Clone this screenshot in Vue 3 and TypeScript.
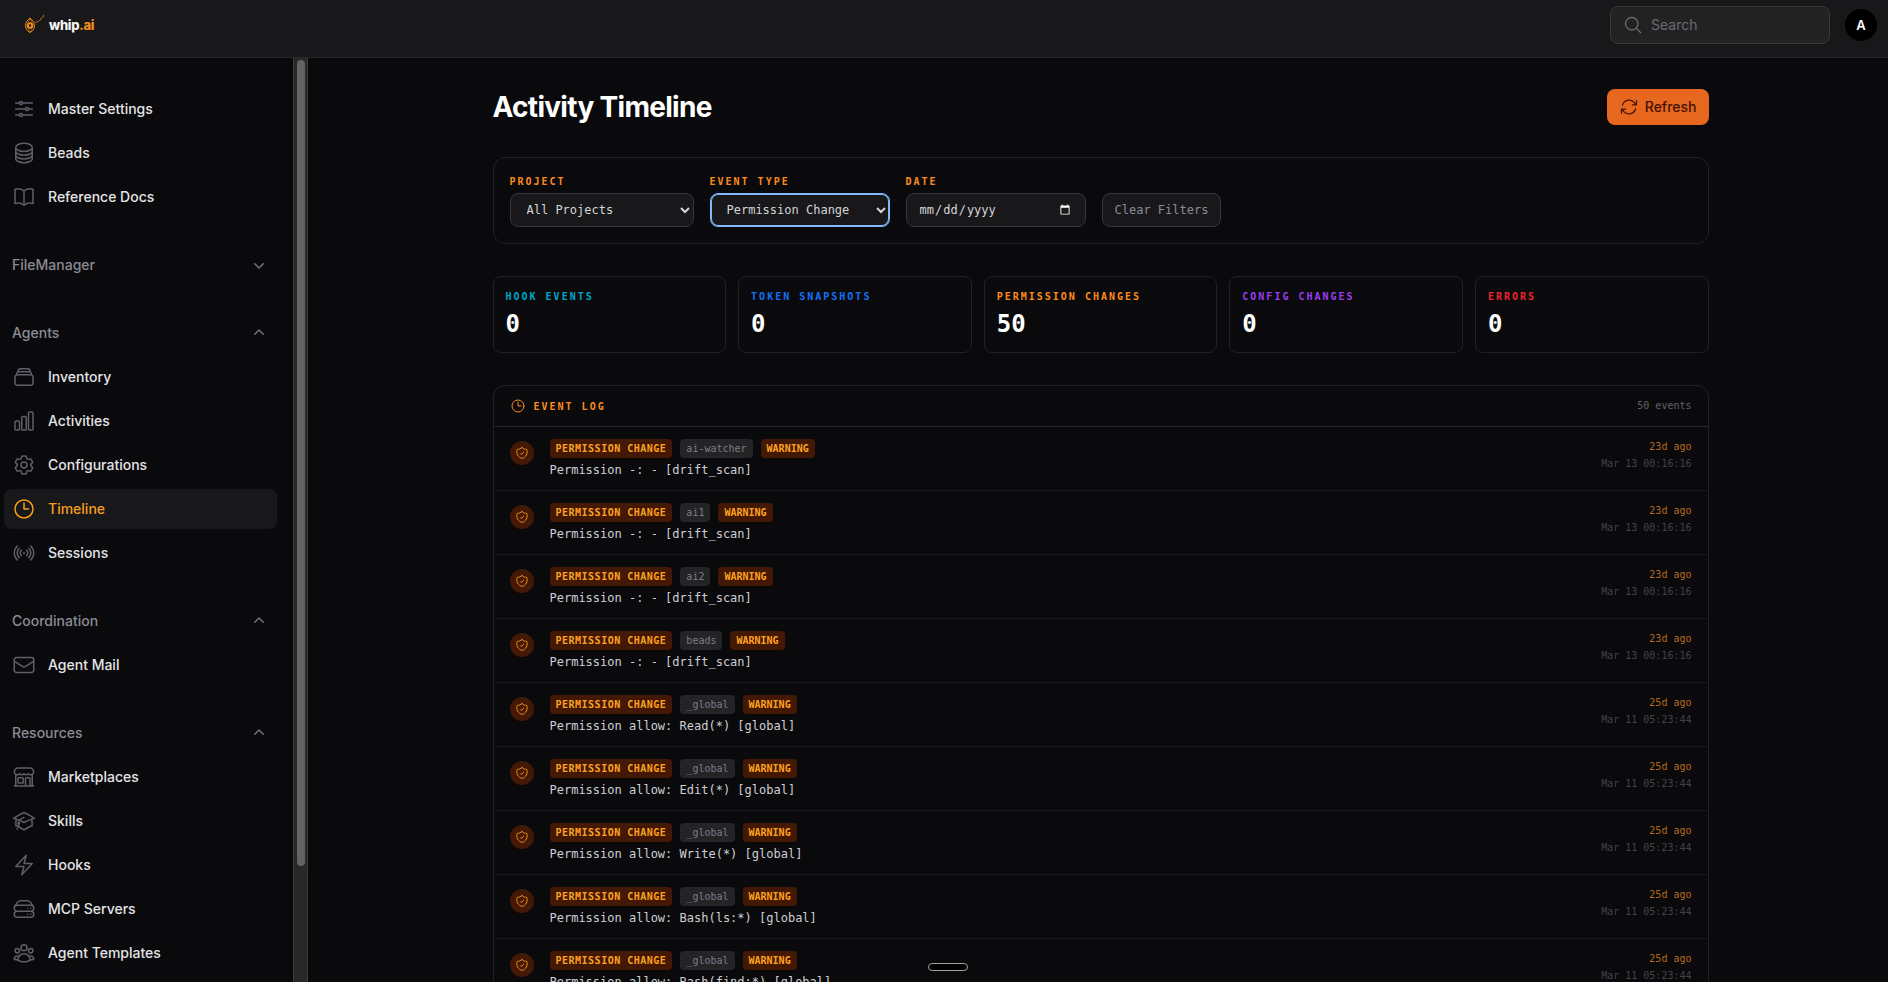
<script setup lang="ts">
import { ref } from 'vue'

interface NavItem {
  label: string
  icon: string
  active?: boolean
}

interface NavGroup {
  label?: string
  open: boolean
  items: NavItem[]
}

interface LogEvent {
  project: string
  text: string
  ago: string
  at: string
}

const icons: Record<string, string> = {
  sliders:
    'M10.5 6h9.75M10.5 6a1.5 1.5 0 1 1-3 0m3 0a1.5 1.5 0 1 0-3 0M3.75 6H7.5m3 12h9.75m-9.75 0a1.5 1.5 0 0 1-3 0m3 0a1.5 1.5 0 0 0-3 0m-3.75 0H7.5m9-6h3.75m-3.75 0a1.5 1.5 0 0 1-3 0m3 0a1.5 1.5 0 0 0-3 0m-9.75 0h9.75',
  database:
    'M20.25 6.375c0 2.278-3.694 4.125-8.25 4.125S3.75 8.653 3.75 6.375m16.5 0c0-2.278-3.694-4.125-8.25-4.125S3.75 4.097 3.75 6.375m16.5 0v11.25c0 2.278-3.694 4.125-8.25 4.125s-8.25-1.847-8.25-4.125V6.375m16.5 0v3.75m-16.5-3.75v3.75m16.5 0v3.75C20.25 16.153 16.556 18 12 18s-8.25-1.847-8.25-4.125v-3.75m16.5 0c0 2.278-3.694 4.125-8.25 4.125s-8.25-1.847-8.25-4.125',
  book: 'M12 6.042A8.967 8.967 0 0 0 6 3.75c-1.052 0-2.062.18-3 .512v14.25A8.987 8.987 0 0 1 6 18c2.305 0 4.408.867 6 2.292m0-14.25a8.966 8.966 0 0 1 6-2.292c1.052 0 2.062.18 3 .512v14.25A8.987 8.987 0 0 0 18 18a8.967 8.967 0 0 0-6 2.292m0-14.25v14.25',
  stack:
    'M6 6.878V6a2.25 2.25 0 0 1 2.25-2.25h7.5A2.25 2.25 0 0 1 18 6v.878m-12 0c.235-.083.487-.128.75-.128h10.5c.263 0 .515.045.75.128m-12 0A2.25 2.25 0 0 0 4.5 9v.878m13.5-3A2.25 2.25 0 0 1 19.5 9v.878m0 0a2.246 2.246 0 0 0-.75-.128H5.25c-.263 0-.515.045-.75.128m15 0A2.25 2.25 0 0 1 21 12v6a2.25 2.25 0 0 1-2.25 2.25H5.25A2.25 2.25 0 0 1 3 18v-6c0-.98.626-1.813 1.5-2.122',
  chart:
    'M3 13.125C3 12.504 3.504 12 4.125 12h2.25c.621 0 1.125.504 1.125 1.125v6.75C7.5 20.496 6.996 21 6.375 21h-2.25A1.125 1.125 0 0 1 3 19.875v-6.75ZM9.75 8.625c0-.621.504-1.125 1.125-1.125h2.25c.621 0 1.125.504 1.125 1.125v11.25c0 .621-.504 1.125-1.125 1.125h-2.25a1.125 1.125 0 0 1-1.125-1.125V8.625ZM16.5 4.125c0-.621.504-1.125 1.125-1.125h2.25C20.496 3 21 3.504 21 4.125v15.75c0 .621-.504 1.125-1.125 1.125h-2.25a1.125 1.125 0 0 1-1.125-1.125V4.125Z',
  cog: 'M9.594 3.94c.09-.542.56-.94 1.11-.94h2.593c.55 0 1.02.398 1.11.94l.213 1.281c.063.374.313.686.645.87.074.04.147.083.22.127.325.196.72.257 1.075.124l1.217-.456a1.125 1.125 0 0 1 1.37.49l1.296 2.247a1.125 1.125 0 0 1-.26 1.431l-1.003.827c-.293.241-.438.613-.43.992a7.723 7.723 0 0 1 0 .255c-.008.378.137.75.43.991l1.004.827c.424.35.534.955.26 1.43l-1.298 2.247a1.125 1.125 0 0 1-1.369.491l-1.217-.456c-.355-.133-.75-.072-1.076.124a6.47 6.47 0 0 1-.22.128c-.331.183-.581.495-.644.869l-.213 1.281c-.09.543-.56.94-1.11.94h-2.594c-.55 0-1.019-.398-1.11-.94l-.213-1.281c-.062-.374-.312-.686-.644-.87a6.52 6.52 0 0 1-.22-.127c-.325-.196-.72-.257-1.076-.124l-1.217.456a1.125 1.125 0 0 1-1.369-.49l-1.297-2.247a1.125 1.125 0 0 1 .26-1.431l1.004-.827c.292-.24.437-.613.43-.991a6.932 6.932 0 0 1 0-.255c.007-.38-.138-.751-.43-.992l-1.004-.827a1.125 1.125 0 0 1-.26-1.43l1.297-2.247a1.125 1.125 0 0 1 1.37-.491l1.216.456c.356.133.751.072 1.076-.124.072-.044.146-.086.22-.128.332-.183.582-.495.644-.869l.214-1.28ZM15 12a3 3 0 1 1-6 0 3 3 0 0 1 6 0Z',
  clock: 'M12 6v6h4.5m4.5 0a9 9 0 1 1-18 0 9 9 0 0 1 18 0Z',
  signal:
    'M9.348 14.652a3.75 3.75 0 0 1 0-5.304m5.304 0a3.75 3.75 0 0 1 0 5.304m-7.425 2.121a6.75 6.75 0 0 1 0-9.546m9.546 0a6.75 6.75 0 0 1 0 9.546M5.106 18.894c-3.808-3.807-3.808-9.98 0-13.788m13.788 0c3.808 3.807 3.808 9.98 0 13.788M12 12h.008v.008H12V12Zm.375 0a.375.375 0 1 1-.75 0 .375.375 0 0 1 .75 0Z',
  mail: 'M21.75 6.75v10.5a2.25 2.25 0 0 1-2.25 2.25h-15a2.25 2.25 0 0 1-2.25-2.25V6.75m19.5 0A2.25 2.25 0 0 0 19.5 4.5h-15a2.25 2.25 0 0 0-2.25 2.25m19.5 0v.243a2.25 2.25 0 0 1-1.07 1.916l-7.5 4.615a2.25 2.25 0 0 1-2.36 0L3.32 8.91a2.25 2.25 0 0 1-1.07-1.916V6.75',
  store:
    'M13.5 21v-7.5a.75.75 0 0 1 .75-.75h3a.75.75 0 0 1 .75.75V21m-4.5 0H2.36m11.14 0H18m0 0h3.64m-1.39 0V9.349M3.75 21V9.349m0 0a3.001 3.001 0 0 0 3.75-.615A2.993 2.993 0 0 0 9.75 9.75c.896 0 1.7-.393 2.25-1.016a2.993 2.993 0 0 0 2.25 1.016c.896 0 1.7-.393 2.25-1.015a3.001 3.001 0 0 0 3.75.614m-16.5 0a3.004 3.004 0 0 1-.621-4.72l1.189-1.19A1.5 1.5 0 0 1 5.378 3h13.243a1.5 1.5 0 0 1 1.06.44l1.19 1.189a3 3 0 0 1-.621 4.72M6.75 18h3.75a.75.75 0 0 0 .75-.75V13.5a.75.75 0 0 0-.75-.75H6.75a.75.75 0 0 0-.75.75v3.75c0 .414.336.75.75.75Z',
  cap: 'M4.26 10.147a60.438 60.438 0 0 0-.491 6.347A48.62 48.62 0 0 1 12 20.904a48.62 48.62 0 0 1 8.232-4.41 60.46 60.46 0 0 0-.491-6.347m-15.482 0a50.636 50.636 0 0 0-2.658-.813A59.906 59.906 0 0 1 12 3.493a59.903 59.903 0 0 1 10.399 5.84c-.896.248-1.783.52-2.658.814m-15.482 0A50.717 50.717 0 0 1 12 13.489a50.702 50.702 0 0 1 7.74-3.342M6.75 15a.75.75 0 1 0 0-1.5.75.75 0 0 0 0 1.5Zm0 0v-3.675A55.378 55.378 0 0 1 12 8.443m-7.007 11.55A5.981 5.981 0 0 0 6.75 15.75v-1.5',
  bolt: 'm3.75 13.5 10.5-11.25L12 10.5h8.25L9.75 21.75 12 13.5H3.75Z',
  server:
    'M5.25 14.25h13.5m-13.5 0a3 3 0 0 1-3-3m3 3a3 3 0 1 0 0 6h13.5a3 3 0 1 0 0-6m-16.5-3a3 3 0 0 1 3-3h13.5a3 3 0 0 1 3 3m-19.5 0a4.5 4.5 0 0 1 .9-2.7L5.737 5.1a3.375 3.375 0 0 1 2.7-1.35h7.126c1.062 0 2.062.5 2.7 1.35l2.587 3.45a4.5 4.5 0 0 1 .9 2.7m0 0a3 3 0 0 1-3 3m0 3h.008v.008h-.008v-.008Zm0-6h.008v.008h-.008v-.008Zm-3 6h.008v.008h-.008v-.008Zm0-6h.008v.008h-.008v-.008Z',
  users:
    'M18 18.72a9.094 9.094 0 0 0 3.741-.479 3 3 0 0 0-4.682-2.72m.94 3.198.001.031c0 .225-.012.447-.037.666A11.944 11.944 0 0 1 12 21c-2.17 0-4.207-.576-5.963-1.584A6.062 6.062 0 0 1 6 18.719m12 0a5.971 5.971 0 0 0-.941-3.197m0 0A5.995 5.995 0 0 0 12 12.75a5.995 5.995 0 0 0-5.058 2.772m0 0a3 3 0 0 0-4.681 2.72 8.986 8.986 0 0 0 3.74.477m.94-3.197a5.971 5.971 0 0 0-.94 3.197M15 6.75a3 3 0 1 1-6 0 3 3 0 0 1 6 0Zm6 3a2.25 2.25 0 1 1-4.5 0 2.25 2.25 0 0 1 4.5 0Zm-13.5 0a2.25 2.25 0 1 1-4.5 0 2.25 2.25 0 0 1 4.5 0Z',
  refresh:
    'M16.023 9.348h4.992v-.001M2.985 19.644v-4.992m0 0h4.992m-4.993 0 3.181 3.183a8.25 8.25 0 0 0 13.803-3.7M4.031 9.865a8.25 8.25 0 0 1 13.803-3.7l3.181 3.182m0-4.991v4.99',
  shield:
    'M9 12.75 11.25 15 15 9.75m-3-7.036A11.959 11.959 0 0 1 3.598 6 11.99 11.99 0 0 0 3 9.749c0 5.592 3.824 10.29 9 11.623 5.176-1.332 9-6.03 9-11.622 0-1.31-.21-2.571-.598-3.751h-.152c-3.196 0-6.1-1.248-8.25-3.285Z',
  search: 'm21 21-5.197-5.197m0 0A7.5 7.5 0 1 0 5.196 5.196a7.5 7.5 0 0 0 10.607 10.607Z',
}

const groups = ref<NavGroup[]>([
  {
    open: true,
    items: [
      { label: 'Master Settings', icon: 'sliders' },
      { label: 'Beads', icon: 'database' },
      { label: 'Reference Docs', icon: 'book' },
    ],
  },
  { label: 'FileManager', open: false, items: [] },
  {
    label: 'Agents',
    open: true,
    items: [
      { label: 'Inventory', icon: 'stack' },
      { label: 'Activities', icon: 'chart' },
      { label: 'Configurations', icon: 'cog' },
      { label: 'Timeline', icon: 'clock', active: true },
      { label: 'Sessions', icon: 'signal' },
    ],
  },
  { label: 'Coordination', open: true, items: [{ label: 'Agent Mail', icon: 'mail' }] },
  {
    label: 'Resources',
    open: true,
    items: [
      { label: 'Marketplaces', icon: 'store' },
      { label: 'Skills', icon: 'cap' },
      { label: 'Hooks', icon: 'bolt' },
      { label: 'MCP Servers', icon: 'server' },
      { label: 'Agent Templates', icon: 'users' },
    ],
  },
])

const stats = [
  { label: 'Hook Events', value: 0, tone: 'cyan' },
  { label: 'Token Snapshots', value: 0, tone: 'blue' },
  { label: 'Permission Changes', value: 50, tone: 'orange' },
  { label: 'Config Changes', value: 0, tone: 'purple' },
  { label: 'Errors', value: 0, tone: 'red' },
]

const drift = (project: string): LogEvent => ({
  project,
  text: 'Permission -: - [drift_scan]',
  ago: '23d ago',
  at: 'Mar 13 00:16:16',
})

const allow = (rule: string): LogEvent => ({
  project: '_global',
  text: `Permission allow: ${rule} [global]`,
  ago: '25d ago',
  at: 'Mar 11 05:23:44',
})

const events: LogEvent[] = [
  ...['ai-watcher', 'ai1', 'ai2', 'beads'].map(drift),
  ...['Read(*)', 'Edit(*)', 'Write(*)', 'Bash(ls:*)', 'Bash(find:*)'].map(allow),
]

const query = ref('')
const project = ref('all')
const eventType = ref('permission')
const date = ref('')

function clearFilters() {
  project.value = 'all'
  eventType.value = 'all'
  date.value = ''
}
</script>

<template>
  <div class="app">
    <header class="topbar">
      <a class="brand" href="#">
        <svg class="brand-mark" viewBox="0 0 20 20" aria-hidden="true">
          <path d="M5 4.500C8 6.200 9.500 8.500 9.500 11.500S8 17 5 18.500C2 17 .5 14.500 .5 11.500S2 6.200 5 4.500Z" />
          <path class="thin" d="M5 4.500 1.800 11.500 5 18.500 8.200 11.500Z" />
          <circle cx="5" cy="11.500" r="2.200" />
          <path class="lash" d="M10.500 8.500 13 7.500M14 6.800 15.500 6 16 4.500M17 3.500 18.500 2.800V1.200" />
        </svg>
        <span class="brand-name">whip<span class="brand-dot">.ai</span></span>
      </a>
      <div class="topbar-end">
        <label class="search">
          <svg class="icon20" viewBox="0 0 24 24" aria-hidden="true"><path :d="icons.search" /></svg>
          <input v-model="query" type="search" placeholder="Search" aria-label="Search" />
        </label>
        <button class="avatar" type="button" aria-label="User menu">A</button>
      </div>
    </header>

    <div class="body">
      <aside class="sidebar">
        <nav class="nav">
          <section v-for="(group, i) in groups" :key="i" class="group">
            <button v-if="group.label" class="group-head" type="button" :aria-expanded="group.open" @click="group.open = !group.open">
              <span>{{ group.label }}</span>
              <svg class="chevron" :class="{ up: group.open }" viewBox="0 0 20 20" aria-hidden="true">
                <path d="M5.220 8.220a.75.75 0 0 1 1.060 0L10 11.940l3.720-3.720a.75.75 0 1 1 1.060 1.060l-4.250 4.250a.75.75 0 0 1-1.060 0L5.220 9.280a.75.75 0 0 1 0-1.060Z" />
              </svg>
            </button>
            <template v-if="group.open">
              <a v-for="item in group.items" :key="item.label" class="nav-item" :class="{ active: item.active }" href="#">
                <svg class="icon24" viewBox="0 0 24 24" aria-hidden="true"><path :d="icons[item.icon]" /></svg>
                <span>{{ item.label }}</span>
              </a>
            </template>
          </section>
        </nav>
        <div class="track" aria-hidden="true"><div class="thumb"></div></div>
      </aside>

      <main class="main">
        <div class="content">
          <div class="page-head">
            <h1>Activity Timeline</h1>
            <button class="refresh" type="button">
              <svg class="icon20" viewBox="0 0 24 24" aria-hidden="true"><path :d="icons.refresh" /></svg>
              <span>Refresh</span>
            </button>
          </div>

          <form class="filters" @submit.prevent>
            <div class="field">
              <label class="caption" for="project">Project</label>
              <select id="project" v-model="project" class="control wide">
                <option value="all">All Projects</option>
              </select>
            </div>
            <div class="field">
              <label class="caption" for="type">Event Type</label>
              <select id="type" v-model="eventType" class="control focused">
                <option value="all">All Events</option>
                <option value="permission">Permission Change</option>
              </select>
            </div>
            <div class="field">
              <label class="caption" for="date">Date</label>
              <input id="date" v-model="date" class="control" type="date" />
            </div>
            <button class="control clear" type="button" @click="clearFilters">Clear Filters</button>
          </form>

          <div class="stats">
            <div v-for="s in stats" :key="s.label" class="stat">
              <div class="caption" :class="s.tone">{{ s.label }}</div>
              <div class="stat-value">{{ s.value }}</div>
            </div>
          </div>

          <section class="log">
            <div class="log-head">
              <svg class="icon16" viewBox="0 0 24 24" aria-hidden="true"><path :d="icons.clock" /></svg>
              <h2 class="caption">Event Log</h2>
              <span class="count">50 events</span>
            </div>
            <ul class="rows">
              <li v-for="(e, i) in events" :key="i" class="row">
                <span class="row-icon">
                  <svg class="icon14" viewBox="0 0 24 24" aria-hidden="true"><path :d="icons.shield" /></svg>
                </span>
                <div class="row-main">
                  <div class="badges">
                    <span class="badge kind">PERMISSION CHANGE</span>
                    <span class="badge project">{{ e.project }}</span>
                    <span class="badge level">WARNING</span>
                  </div>
                  <p class="row-text">{{ e.text }}</p>
                </div>
                <div class="row-time">
                  <span class="ago">{{ e.ago }}</span>
                  <time class="at">{{ e.at }}</time>
                </div>
              </li>
            </ul>
          </section>
        </div>
      </main>
    </div>

    <div class="handle" aria-hidden="true"></div>
  </div>
</template>

<style>
body {
  margin: 0;
  background: #0a0a0c;
}
</style>

<style scoped>
.app {
  --mono: Menlo, 'DejaVu Sans Mono', monospace;
  --line: #212124;
  position: relative;
  display: flex;
  flex-direction: column;
  height: 100vh;
  overflow: hidden;
  background: #0a0a0c;
  color: #e4e4e7;
  color-scheme: dark;
  font-family: Inter, sans-serif;
  font-size: 14px;
  line-height: 20px;
}
*,
*::before,
*::after {
  box-sizing: border-box;
}
button,
input,
select {
  font: inherit;
  margin: 0;
}
button {
  cursor: pointer;
}
a {
  color: inherit;
  text-decoration: none;
}
h1,
h2,
p,
ul {
  margin: 0;
  padding: 0;
}
svg {
  flex: none;
  fill: none;
  stroke: currentColor;
  stroke-width: 1.5;
  stroke-linecap: round;
  stroke-linejoin: round;
}
.icon24 {
  width: 24px;
  height: 24px;
}
.icon20 {
  width: 20px;
  height: 20px;
}
.icon16 {
  width: 16px;
  height: 16px;
}
.icon14 {
  width: 14px;
  height: 14px;
}

/* Top bar */
.topbar {
  display: flex;
  flex: none;
  align-items: flex-start;
  justify-content: space-between;
  height: 58px;
  padding: 6px 11px 0 25px;
  border-bottom: 1px solid #27272a;
  background: #18181b;
}
.brand {
  display: flex;
  align-items: center;
  gap: 4px;
  height: 38px;
}
.brand-mark {
  width: 20px;
  height: 20px;
  margin-bottom: 2px;
  color: #f28c1c;
  stroke-width: 1;
}
.brand-mark circle {
  stroke-width: 2;
}
.brand-mark .thin {
  stroke-width: 0.5;
}
.brand-mark .lash {
  opacity: 0.7;
}
.brand-name {
  color: #f4f4f5;
  font-size: 13px;
  font-weight: 800;
  letter-spacing: -0.025em;
}
.brand-dot {
  color: #f28c1c;
}
.topbar-end {
  display: flex;
  align-items: center;
  gap: 15px;
}
.search {
  display: flex;
  align-items: center;
  gap: 8px;
  width: 220px;
  height: 38px;
  padding: 0 12px;
  border: 1px solid #3a3a3d;
  border-radius: 8px;
  background: #222223;
  color: #71717a;
}
.search input {
  flex: 1;
  min-width: 0;
  padding: 0;
  border: 0;
  outline: 0;
  background: transparent;
  color: #e4e4e7;
}
.search input::placeholder {
  color: #6b6b74;
}
.avatar {
  width: 32px;
  height: 32px;
  padding: 0;
  border: 0;
  border-radius: 50%;
  background: #000;
  color: #fff;
  font-size: 13px;
  font-weight: 600;
}

/* Sidebar */
.body {
  display: flex;
  flex: 1;
  min-height: 0;
}
.sidebar {
  display: flex;
  flex: none;
  width: 308px;
  overflow: hidden;
}
.nav {
  display: flex;
  flex: 1;
  flex-direction: column;
  gap: 28px;
  padding: 31px 16px 0 4px;
}
.group {
  display: flex;
  flex-direction: column;
  gap: 4px;
}
.group-head,
.nav-item {
  display: flex;
  align-items: center;
  width: 100%;
  height: 40px;
  padding: 0 8px;
  border: 0;
  border-radius: 8px;
  background: transparent;
  font-weight: 500;
}
.group-head {
  justify-content: space-between;
  color: #8b8b95;
}
.chevron {
  width: 20px;
  height: 20px;
  fill: #71717a;
  stroke: none;
}
.chevron.up {
  transform: rotate(180deg);
}
.nav-item {
  gap: 12px;
  color: #e4e4e7;
}
.nav-item .icon24 {
  color: #5f5f69;
}
.nav-item.active {
  background: #18181b;
  color: #f59e1b;
}
.nav-item.active .icon24 {
  color: #f59e1b;
}
.track {
  width: 15px;
  padding: 2px 2px 0 3px;
  border: solid #3b3b3b;
  border-width: 0 1px;
  background: #282828;
}
.thumb {
  width: 8px;
  height: 87.4%;
  border-radius: 4px;
  background: #636363;
}

/* Page */
.main {
  flex: 1;
  min-width: 0;
  padding: 31px 32px 0 37px;
  overflow: hidden;
}
.content {
  display: flex;
  flex-direction: column;
  gap: 32px;
  max-width: 1216px;
  margin: 0 auto;
}
.page-head {
  display: flex;
  align-items: center;
  justify-content: space-between;
}
h1 {
  color: #fff;
  font-size: 28px;
  font-weight: 700;
  letter-spacing: -0.025em;
  line-height: 36px;
}
.refresh {
  display: flex;
  align-items: center;
  gap: 6px;
  height: 36px;
  padding: 0 12px;
  border: 0;
  border-radius: 8px;
  background: #e8671e;
  color: #441306;
  font-weight: 500;
}
.caption {
  color: #fb8a1e;
  font-family: var(--mono);
  font-size: 10px;
  font-weight: 700;
  letter-spacing: 0.2em;
  line-height: 15px;
  text-transform: uppercase;
}
.cyan {
  color: #00a6c8;
}
.blue {
  color: #1570f5;
}
.purple {
  color: #9a3cf0;
}
.red {
  color: #f0242f;
}
.filters {
  display: flex;
  flex-wrap: wrap;
  align-items: flex-end;
  gap: 16px;
  padding: 16px;
  border: 1px solid var(--line);
  border-radius: 12px;
}
.field {
  display: flex;
  flex-direction: column;
  gap: 4px;
}
.control {
  width: 180px;
  height: 34px;
  padding: 0 12px;
  border: 1px solid #37373b;
  border-radius: 8px;
  outline: 0;
  background-color: #18181b;
  color: #d4d4d8;
  font-family: var(--mono);
  font-size: 12px;
}
select.control {
  padding-right: 0;
}
.control.wide {
  width: 184px;
}
.control.focused {
  border-color: #83b9fa;
  box-shadow: inset 0 0 0 1px #83b9fa;
}
.control.clear {
  width: auto;
  color: #8b8b95;
}
.stats {
  display: grid;
  grid-template-columns: repeat(5, 1fr);
  gap: 12px;
}
.stat {
  display: flex;
  flex-direction: column;
  gap: 4px;
  padding: 12px;
  border: 1px solid var(--line);
  border-radius: 8px;
}
.stat-value {
  color: #fff;
  font-family: var(--mono);
  font-size: 24px;
  font-weight: 700;
  line-height: 32px;
}

/* Event log */
.log {
  border: 1px solid var(--line);
  border-radius: 12px;
}
.log-head {
  display: flex;
  align-items: center;
  gap: 8px;
  height: 41px;
  padding: 0 16px;
  border-bottom: 1px solid #27272a;
  color: #fb8a1e;
}
.count {
  margin-left: auto;
  color: #62626c;
  font-family: var(--mono);
  font-size: 10px;
}
.rows {
  list-style: none;
}
.row {
  display: flex;
  align-items: flex-start;
  gap: 16px;
  padding: 12px 16px;
  border-bottom: 1px solid #19191c;
  font-family: var(--mono);
}
.row-icon {
  display: flex;
  flex: none;
  align-items: center;
  justify-content: center;
  width: 24px;
  height: 24px;
  margin-top: 2px;
  border-radius: 50%;
  background: #431805;
  color: #f9981c;
}
.row-main {
  display: flex;
  flex: 1;
  flex-direction: column;
  gap: 4px;
  min-width: 0;
}
.badges {
  display: flex;
  gap: 8px;
}
.badge {
  padding: 2px 6px;
  border-radius: 4px;
  background: #431805;
  color: #fda21f;
  font-size: 10px;
  font-weight: 700;
  line-height: 15px;
}
.badge.kind {
  letter-spacing: 0.05em;
}
.badge.project {
  background: #242427;
  color: #7c7c86;
  font-weight: 400;
}
.row-text {
  color: #cfcfd4;
  font-size: 12px;
  line-height: 16px;
}
.row-time {
  display: flex;
  flex-direction: column;
  align-items: flex-end;
  gap: 2px;
  font-size: 10px;
  line-height: 15px;
}
.ago {
  color: #b9691b;
}
.at {
  color: #43434a;
}

/* Floating grab handle over the page */
.handle {
  position: absolute;
  bottom: 11px;
  left: 50%;
  width: 40px;
  height: 8px;
  margin-left: -16px;
  border: 1px solid #a1a1a1;
  border-radius: 4px;
  background: #000;
}
</style>
